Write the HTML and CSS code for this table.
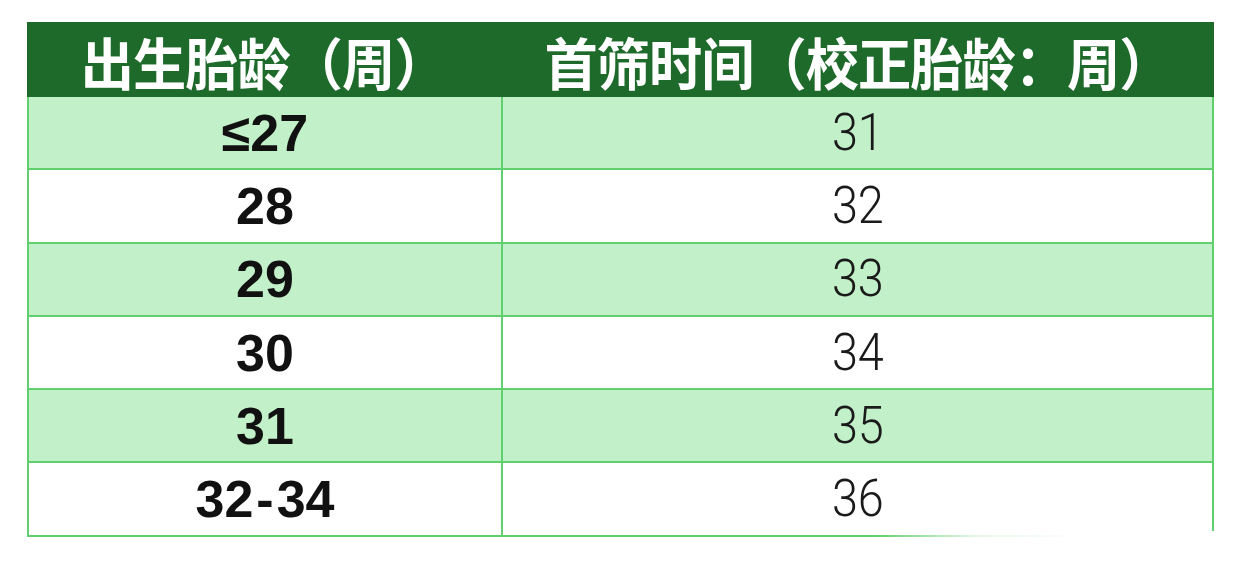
FILE: index.html
```html
<!DOCTYPE html>
<html lang="zh-CN">
<head>
<meta charset="utf-8">
<title>早产儿首筛时间</title>
<link rel="stylesheet" href="styles.css">
</head>
<body>
<div class="page">
  <div class="table">
    <div class="row head">
      <div class="cell c1"><span class="htext">出生胎龄（周）</span></div>
      <div class="cell c2"><span class="htext">首筛时间（校正胎龄：周）</span></div>
    </div>
    <div class="row alt">
      <div class="cell c1"><span class="num bold">≤27</span></div>
      <div class="cell c2"><span class="num light">31</span></div>
    </div>
    <div class="row">
      <div class="cell c1"><span class="num bold">28</span></div>
      <div class="cell c2"><span class="num light">32</span></div>
    </div>
    <div class="row alt">
      <div class="cell c1"><span class="num bold">29</span></div>
      <div class="cell c2"><span class="num light">33</span></div>
    </div>
    <div class="row">
      <div class="cell c1"><span class="num bold">30</span></div>
      <div class="cell c2"><span class="num light">34</span></div>
    </div>
    <div class="row alt">
      <div class="cell c1"><span class="num bold">31</span></div>
      <div class="cell c2"><span class="num light">35</span></div>
    </div>
    <div class="row last">
      <div class="cell c1"><span class="num bold">32<span class="dash">-</span>34</span></div>
      <div class="cell c2"><span class="num light">36</span></div>
    </div>
    <div class="fade"></div>
  </div>
</div>
</body>
</html>
```
FILE: styles.css
```css
html, body {
  margin: 0;
  padding: 0;
  background: #ffffff;
}
.page {
  padding: 22px 0 0 27px;
}
.table {
  position: relative;
  width: 1187px;
  display: flex;
  flex-direction: column;
  border-left: 2px solid #62cf6e;
  border-right: 2px solid #62cf6e;
  box-sizing: border-box;
}
.row {
  display: grid;
  grid-template-columns: 474px 1fr;
  height: 73.3px;
  border-bottom: 2px solid #62cf6e;
  box-sizing: border-box;
  background: #ffffff;
}
.row.alt {
  background: #c2f0c8;
}
.row.head {
  height: 75px;
  background: #1e6a2a;
  border-bottom: none;
  margin-left: -2px;
  margin-right: -2px;
  grid-template-columns: 476px 1fr;
}
.cell {
  display: flex;
  align-items: center;
  justify-content: center;
}
.row .c1 {
  border-right: 2px solid #62cf6e;
}
.row.head .c1 {
  border-right: none;
}
.htext {
  font-family: "Noto Sans CJK SC", sans-serif;
  font-weight: 700;
  font-size: 56px;
  color: #ffffff;
  letter-spacing: -1px;
  display: inline-block;
  transform: scaleX(0.95);
  line-height: 1;
  padding-top: 2px;
  white-space: nowrap;
}
.row.head .c1 .htext {
  margin-left: -4px;
}
.row.head .c2 .htext {
  margin-left: -2px;
}
.num {
  display: inline-block;
  line-height: 1;
  color: #111111;
  white-space: nowrap;
}
.bold {
  font-family: "Liberation Sans", Arial, sans-serif;
  font-weight: 700;
  font-size: 52px;
}
.dash {
  padding: 0 3px;
}
.light {
  font-family: Roboto, "Liberation Sans", sans-serif;
  font-weight: 300;
  font-size: 52px;
  color: #1a1a1a;
  transform: scaleX(0.9);
}
.fade {
  position: absolute;
  right: -4px;
  bottom: -6px;
  width: 340px;
  height: 12px;
  background: linear-gradient(to right, rgba(255,255,255,0) 0%, rgba(255,255,255,0.85) 30%, #ffffff 60%, #ffffff 100%);
  pointer-events: none;
}
```
